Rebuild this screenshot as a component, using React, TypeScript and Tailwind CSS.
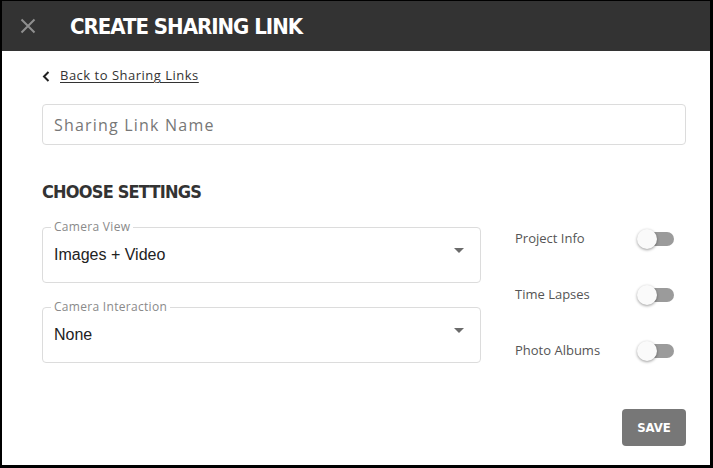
const Toggle = () => (
  <div className="relative w-[37px] h-5">
    <div className="absolute left-[3px] top-[3px] w-[34px] h-[14px] rounded-full bg-[#9b9b9b]" />
    <div className="absolute left-0 top-0 w-5 h-5 rounded-full bg-[#fafafa] shadow-[0_1px_3px_rgba(0,0,0,0.4)]" />
  </div>
);

const SelectBox = ({ label, value }: { label: string; value: string }) => (
  <div className="relative h-[56px] rounded-[4px] border border-[#dcdcdc] pl-[11px] pr-[16px] flex items-center justify-between">
    <span className="absolute left-[8px] top-[-8px] bg-white px-[3px] text-[12px] leading-[14px] text-[#8a8a8a] tracking-[0.3px] font-['Open_Sans',sans-serif]">
      {label}
    </span>
    <span className="text-[16px] text-[#222] font-['Liberation_Sans',Arial,sans-serif]">{value}</span>
    <span className="mt-[-10px] w-0 h-0 border-l-[5px] border-r-[5px] border-t-[5px] border-l-transparent border-r-transparent border-t-[#6b6b6b]" />
  </div>
);

const ToggleRow = ({ label }: { label: string }) => (
  <div className="flex items-center justify-between h-[20px]">
    <span className="text-[13px] text-[#555] font-['Open_Sans',sans-serif]">{label}</span>
    <Toggle />
  </div>
);

export default function App() {
  return (
    <div className="w-[713px] h-[468px] border-l-2 border-t border-r-[3px] border-b-[3px] border-black bg-white flex flex-col">
      <div className="h-[50px] bg-[#333333] flex items-center shrink-0">
        <svg className="ml-[18px] shrink-0" width="16" height="16" viewBox="0 0 16 16">
          <path d="M1.5 1.5 L14.5 14.5 M14.5 1.5 L1.5 14.5" stroke="#8f8f8f" strokeWidth="2" />
        </svg>
        <h1 className="ml-[34px] text-white text-[22px] font-bold tracking-[-1px] font-['DejaVu_Sans_Condensed',sans-serif]">
          CREATE SHARING LINK
        </h1>
      </div>

      <div className="flex-1 pl-[40px] pr-[24px] pt-[15px]">
        <a className="flex items-center gap-[10px] text-[13px] text-[#333] tracking-[0.5px] font-['Open_Sans',sans-serif] h-[20px]">
          <svg width="8" height="11" viewBox="0 0 8 11" className="shrink-0">
            <path d="M6.5 1 L2 5.5 L6.5 10" fill="none" stroke="#222" strokeWidth="2" />
          </svg>
          <span className="underline underline-offset-2">Back to Sharing Links</span>
        </a>

        <div className="mt-[18px] h-[41px] rounded-[4px] border border-[#dcdcdc] flex items-center px-[11px]">
          <span className="text-[16px] text-[#777] tracking-[1.2px] font-['Open_Sans',sans-serif]">Sharing Link Name</span>
        </div>

        <h2 className="mt-[35px] text-[18px] leading-[24px] font-bold text-[#333] tracking-[-0.8px] font-['DejaVu_Sans_Condensed',sans-serif]">
          CHOOSE SETTINGS
        </h2>

        <div className="mt-[23px] flex gap-[34px]">
          <div className="w-[439px] flex flex-col gap-[24px]">
            <SelectBox label="Camera View" value="Images + Video" />
            <SelectBox label="Camera Interaction" value="None" />
          </div>
          <div className="w-[159px] flex flex-col gap-[36px] pt-[2px]">
            <ToggleRow label="Project Info" />
            <ToggleRow label="Time Lapses" />
            <ToggleRow label="Photo Albums" />
          </div>
        </div>

        <div className="flex justify-end mt-[46px]">
          <button className="w-[64px] h-[37px] rounded-[4px] bg-[#777] text-white text-[13px] font-bold font-['DejaVu_Sans_Condensed',sans-serif]">
            SAVE
          </button>
        </div>
      </div>
    </div>
  );
}
